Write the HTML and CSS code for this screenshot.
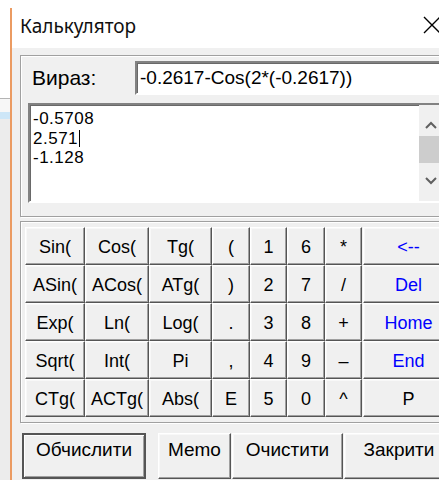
FILE: index.html
```html
<!DOCTYPE html>
<html lang="uk">
<head>
<meta charset="utf-8">
<title>Калькулятор</title>
<link rel="stylesheet" href="styles.css">
</head>
<body>
<div class="desk">
  <div class="desk-top"></div>
  <div class="desk-line"></div>
  <div class="desk-sel"></div>
</div>
<div class="window">
  <div class="titlebar">
    <span class="title">Калькулятор</span>
    <svg class="close" width="18" height="18" viewBox="0 0 18 18"><path d="M1 1 L17 17 M17 1 L1 17" stroke="#000" stroke-width="1.4" fill="none"/></svg>
  </div>
  <div class="client">
    <div class="panel panel-top">
      <div class="expr-row">
        <span class="expr-label">Вираз:</span>
        <div class="edit">-0.2617-Cos(2*(-0.2617))</div>
      </div>
      <div class="memo">
        <div class="memo-text">
          <div>-0.5708</div>
          <div>2.571<span class="caret"></span></div>
          <div>-1.128</div>
        </div>
        <div class="vscroll">
          <svg class="arrow" width="12" height="8" viewBox="0 0 12 8"><path d="M1 7 L6 2 L11 7" stroke="#606060" stroke-width="2" fill="none"/></svg>
          <div class="thumb"></div>
          <div class="track"></div>
          <svg class="arrow" width="12" height="8" viewBox="0 0 12 8"><path d="M1 1 L6 6 L11 1" stroke="#606060" stroke-width="2" fill="none"/></svg>
        </div>
      </div>
    </div>
    <div class="panel panel-keys">
      <div class="keys">
        <button class="key">Sin(</button><button class="key">Cos(</button><button class="key">Tg(</button><button class="key">(</button><button class="key">1</button><button class="key">6</button><button class="key">*</button><button class="key key-edit">&lt;--</button>
        <button class="key">ASin(</button><button class="key">ACos(</button><button class="key">ATg(</button><button class="key">)</button><button class="key">2</button><button class="key">7</button><button class="key">/</button><button class="key key-edit">Del</button>
        <button class="key">Exp(</button><button class="key">Ln(</button><button class="key">Log(</button><button class="key">.</button><button class="key">3</button><button class="key">8</button><button class="key">+</button><button class="key key-edit">Home</button>
        <button class="key">Sqrt(</button><button class="key">Int(</button><button class="key">Pi</button><button class="key">,</button><button class="key">4</button><button class="key">9</button><button class="key">–</button><button class="key key-edit">End</button>
        <button class="key">CTg(</button><button class="key">ACTg(</button><button class="key">Abs(</button><button class="key">E</button><button class="key">5</button><button class="key">0</button><button class="key">^</button><button class="key key-p">P</button>
      </div>
    </div>
    <div class="actions">
      <button class="btn btn-default btn-calc">Обчислити</button>
      <button class="btn btn-memo">Memo</button>
      <button class="btn btn-clear">Очистити</button>
      <button class="btn btn-close">Закрити</button>
    </div>
  </div>
</div>
</body>
</html>
```

FILE: styles.css
```css
html, body {
  margin: 0;
  padding: 0;
}

body {
  width: 439px;
  height: 480px;
  overflow: hidden;
  display: flex;
  background: #fff;
  font-family: "Liberation Sans", Arial, sans-serif;
  font-size: 18px;
  color: #000;
}

/* strip of the window behind */
.desk {
  flex: none;
  width: 10px;
  display: flex;
  flex-direction: column;
  background: #ececec;
}
.desk-top {
  height: 98px;
  background: #fff;
}
.desk-line {
  height: 1px;
  background: #b4b4b4;
}
.desk-sel {
  height: 20px;
  background: linear-gradient(#f7f7f7 0 13px, #cde6f7 13px);
}

.window {
  flex: none;
  width: 470px;
  margin-top: 8px;
  border-left: 2px solid #eb9b62;
  background: #f0f0f0;
}

.titlebar {
  height: 40px;
  background: #fff;
  display: flex;
  align-items: center;
  padding-left: 8px;
  position: relative;
}
.title {
  font-family: "Noto Sans", "Open Sans", sans-serif;
  font-size: 19px;
  color: #101010;
  margin-top: -4px;
}
.close {
  position: absolute;
  left: 411px;
  top: 8px;
}

.client {
  padding: 7px 0 0 8px;
}

.panel {
  border: 1px solid #a0a0a0;
  box-shadow: inset 1px 1px #fff, 1px 1px #fff;
  border-right: none;
}

.panel-top {
  height: 155px;
  padding: 5px 0 0 7px;
}

.expr-row {
  display: flex;
  align-items: center;
}
.expr-label {
  width: 103px;
  padding-left: 4px;
  font-size: 21px;
}
.edit {
  width: 320px;
  height: 30px;
  line-height: 30px;
  background: #fff;
  border: 2px solid;
  border-color: #828282 #fff #fff #828282;
  box-shadow: inset 1px 1px #696969;
  padding-left: 3px;
  font-size: 19px;
  white-space: nowrap;
}

.memo {
  margin-top: 8px;
  width: 414px;
  height: 96px;
  background: #fff;
  border: 2px solid;
  border-color: #828282 #fff #fff #828282;
  box-shadow: inset 1px 1px #696969;
  display: flex;
  justify-content: space-between;
}
.memo-text {
  padding: 4px 0 0 3px;
  line-height: 19.5px;
  font-size: 17px;
  letter-spacing: 0.5px;
}
.caret {
  display: inline-block;
  width: 1px;
  height: 17px;
  background: #000;
  vertical-align: -3px;
  margin-left: 1px;
}

.vscroll {
  width: 25px;
  background: #f0f0f0;
  display: flex;
  flex-direction: column;
  align-items: center;
}
.vscroll .arrow {
  flex: none;
  margin: 16px 2px 7px 0;
}
.vscroll .arrow:last-child {
  margin: 14px 2px 16px 0;
}
.thumb {
  align-self: stretch;
  height: 31px;
  background: #cdcdcd;
}
.track {
  flex: 1;
}

.panel-keys {
  margin-top: 4px;
  padding: 5px 0 5px 4px;
}

.keys {
  display: grid;
  grid-template-columns: 60px 64px 63px 38px 37px 38px 37px 92px;
  grid-auto-rows: 38px;
}

button {
  font-family: "Liberation Sans", Arial, sans-serif;
  font-size: 18px;
  color: #000;
  background: #f0f0f0;
  margin: 0;
  padding: 0;
  border: 1px solid;
  border-color: #fff #555 #555 #fff;
  box-shadow: inset -1px -1px #a0a0a0, inset 1px 1px #f8f8f8;
  cursor: default;
}

.key {
  line-height: 1;
  padding-top: 1px;
}
.key-edit,
.key-p {
  margin-left: 1px;
}
.key-edit {
  color: #0000ff;
}

.actions {
  display: flex;
  margin-top: 10px;
  padding-left: 2px;
}
.btn {
  height: 46px;
  padding-bottom: 12px;
  font-size: 19px;
}
.btn-default {
  border: 2px solid #555;
  box-shadow: inset 1px 1px #fff, inset -1px -1px #a0a0a0;
}
.btn-calc { width: 124px; }
.btn-memo { width: 73px; margin-left: 12px; }
.btn-clear { width: 111px; margin-left: 1px; }
.btn-close { width: 110px; margin-left: 1px; }
```
